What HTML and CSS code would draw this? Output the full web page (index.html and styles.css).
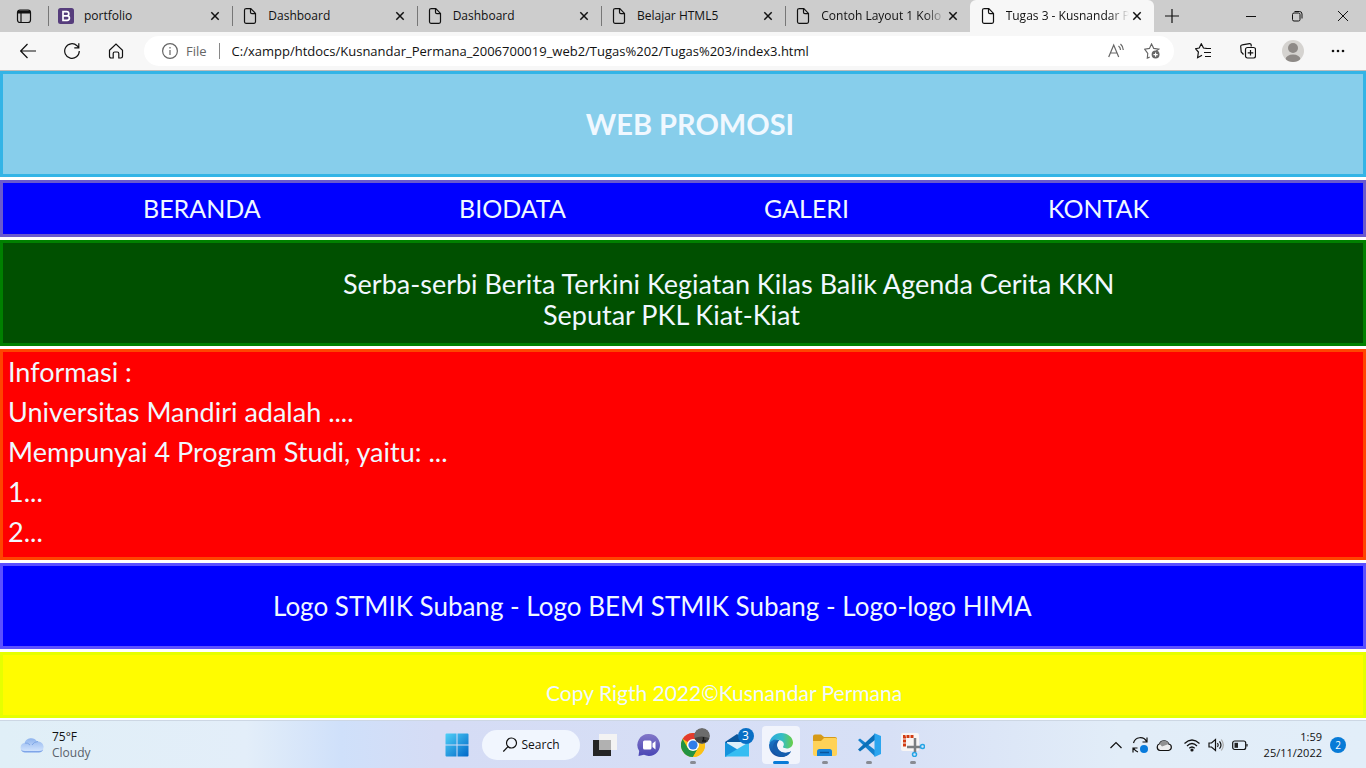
FILE: index.html
```html
<!DOCTYPE html>
<html lang="id">
<head>
<meta charset="utf-8">
<meta name="viewport" content="width=device-width, initial-scale=1">
<title>Tugas 3 - Kusnandar Permana</title>
<link rel="stylesheet" href="styles.css">
</head>
<body>
<svg class="defs" aria-hidden="true">
  <symbol id="page" viewBox="0 0 16 16"><path d="M3.5.7h5.3l4.7 4.7v8.4q0 1.5-1.5 1.5H4q-1.5 0-1.5-1.5V2.200Q2.500.7 4 .7M8.500.7v3.600q0 1.400 1.400 1.400h3.600"/></symbol>
  <symbol id="close" viewBox="0 0 16 16"><path d="M4.300 4.300l7.400 7.400M11.700 4.300l-7.400 7.400"/></symbol>
</svg>

<div class="tabbar">
  <button class="tab-menu" aria-label="Tab actions"><svg class="icon" viewBox="0 0 16 16"><rect x="1.500" y="2" width="13" height="12.500" rx="2.500"/><path d="M2 4h12" stroke-width="3"/><path d="M5 4v10"/></svg></button>
  <div class="tabs">
    <div class="tab"><svg class="favicon" viewBox="0 0 16 16"><rect width="16" height="16" rx="2.500" fill="#563d7c"/><path d="M5 3.600h3.700a2 2 0 0 1 0 4.200H5zm0 4.200h4.100a2.300 2.300 0 0 1 0 4.600H5z" fill="none" stroke="#fff" stroke-width="1.700"/></svg><button class="tab-title">portfolio</button><button class="tab-close" aria-label="Close portfolio"><svg class="icon"><use href="#close"/></svg></button></div>
    <div class="tab"><svg class="icon"><use href="#page"/></svg><button class="tab-title">Dashboard</button><button class="tab-close" aria-label="Close tab"><svg class="icon"><use href="#close"/></svg></button></div>
    <div class="tab"><svg class="icon"><use href="#page"/></svg><button class="tab-title">Dashboard</button><button class="tab-close" aria-label="Close tab"><svg class="icon"><use href="#close"/></svg></button></div>
    <div class="tab"><svg class="icon"><use href="#page"/></svg><button class="tab-title">Belajar HTML5</button><button class="tab-close" aria-label="Close tab"><svg class="icon"><use href="#close"/></svg></button></div>
    <div class="tab"><svg class="icon"><use href="#page"/></svg><button class="tab-title fade">Contoh Layout 1 Kolo</button><button class="tab-close" aria-label="Close tab"><svg class="icon"><use href="#close"/></svg></button></div>
    <div class="tab active"><svg class="icon"><use href="#page"/></svg><button class="tab-title fade">Tugas 3 - Kusnandar P</button><button class="tab-close" aria-label="Close tab"><svg class="icon"><use href="#close"/></svg></button></div>
  </div>
  <button class="new-tab" aria-label="New tab"><svg class="icon" viewBox="0 0 16 16"><path d="M8 1v14M1 8h14"/></svg></button>
  <div class="window-controls">
    <button aria-label="Minimize"><svg class="icon" viewBox="0 0 16 16"><path d="M3 8.500h10"/></svg></button>
    <button aria-label="Restore"><svg class="icon" viewBox="0 0 16 16"><rect x="3.500" y="5" width="7.500" height="8" rx="1.500"/><path d="M5.500 3.500h5q2.500 0 2.500 2.500v4.500"/></svg></button>
    <button aria-label="Close window"><svg class="icon" viewBox="0 0 16 16"><path d="M3 3l10 10M13 3L3 13"/></svg></button>
  </div>
</div>

<div class="toolbar">
  <div class="nav-buttons">
    <button aria-label="Back"><svg class="icon" viewBox="0 0 16 16"><path d="M16 8H1M7.500 1L.7 8l6.800 7"/></svg></button>
    <button aria-label="Refresh"><svg class="icon" viewBox="0 0 16 16"><path d="M15.300 8A7.300 7.300 0 1 1 13 2.700l1.500 1.600M14.800.300v4.500h-4.500"/></svg></button>
    <button aria-label="Home"><svg class="icon" viewBox="0 0 16 16"><path d="M1.500 7.300L8 1l6.500 6.300v6q0 1.700-1.700 1.700h-2V10.500Q10.800 9 9.300 9H6.700Q5.200 9 5.200 10.500V15h-2q-1.700 0-1.700-1.700z"/></svg></button>
  </div>
  <div class="address">
    <svg class="icon info" viewBox="0 0 16 16"><circle cx="8" cy="8" r="7.400"/><path d="M8 7v5M8 4v1.400"/></svg>
    <label for="url">File</label>
    <input id="url" type="text" value="C:/xampp/htdocs/Kusnandar_Permana_2006700019_web2/Tugas%202/Tugas%203/index3.html">
    <button aria-label="Read aloud"><svg class="icon" viewBox="0 0 16 16"><path d="M.7 14L5.700 2l5 12M2.500 10h6.400M10.500 3q2 1.500 2 4M12.500 1q2.800 2.500 2.800 6"/></svg></button>
    <button aria-label="Add to favorites"><svg class="icon" viewBox="0 0 17 17"><path d="M6 15l-2.500 1 .5-5L.7 6.500 5.800 5.700 8 1l2.300 4.700 5.500.8-2.800 2"/><circle cx="12.300" cy="12.300" r="4.200" fill="#666" stroke="none"/><path d="M12.300 10v4.600M10 12.300h4.600" stroke="#fff"/></svg></button>
  </div>
  <div class="tools">
    <button aria-label="Favorites"><svg class="icon" viewBox="0 0 16 16"><path d="M11.500 5.300L8.500 5 6.300.8 4.200 5l-3.700.7L3.400 9l-.8 5.700L7 12.300M10 5.500h6M9 9.500h7M10 13.500h6"/></svg></button>
    <button aria-label="Collections"><svg class="icon" viewBox="0 0 16 16"><path d="M3.500 11.500L1.200 9 .7 3.500Q.6 2 2.200 1.800L9.500.700q1.500-.2 1.700 1.300v1.500"/><rect x="5.500" y="4.500" width="10" height="10.500" rx="2"/><path d="M10.500 7v5.500M7.700 9.800h5.600"/></svg></button>
    <button class="avatar" aria-label="Profile"><svg viewBox="0 0 22 22"><defs><clipPath id="face"><circle cx="11" cy="11" r="11"/></clipPath></defs><g clip-path="url(#face)"><path d="M0 0h22v22H0z" fill="#d5d3d0"/><circle cx="11" cy="8" r="5" fill="#8e8a87"/><ellipse cx="11" cy="19.500" rx="7.500" ry="5" fill="#8e8a87"/></g></svg></button>
    <button aria-label="Settings and more"><svg class="icon dots" viewBox="0 0 16 16"><circle cx="3" cy="8" r="1.300"/><circle cx="8" cy="8" r="1.300"/><circle cx="13" cy="8" r="1.300"/></svg></button>
  </div>
</div>

<div class="site">
  <header class="box banner"><h1>WEB PROMOSI</h1></header>
  <nav class="box menu"><a href="#beranda">BERANDA</a><a href="#biodata">BIODATA</a><a href="#galeri">GALERI</a><a href="#kontak">KONTAK</a></nav>
  <section class="box news"><p>Serba-serbi Berita Terkini Kegiatan Kilas Balik Agenda Cerita KKN</p><p class="second">Seputar PKL Kiat-Kiat</p></section>
  <main class="box info-box"><p>Informasi :</p><p>Universitas Mandiri adalah ....</p><p>Mempunyai 4 Program Studi, yaitu: ...</p><p>1...</p><p>2...</p></main>
  <section class="box logos"><p>Logo STMIK Subang - Logo BEM STMIK Subang - Logo-logo HIMA</p></section>
  <footer class="box copyright"><p>Copy Rigth 2022©Kusnandar Permana</p></footer>
</div>

<div class="taskbar">
  <button class="weather"><svg viewBox="0 0 24 16"><defs><linearGradient id="cloud" x2="0" y2="1"><stop stop-color="#8fb4ee"/><stop offset="1" stop-color="#d7e8ff"/></linearGradient></defs><path d="M5 15.500a4.800 4.800 0 0 1-.5-9.500A7 7 0 0 1 17 4.500a5.500 5.500 0 1 1 2 11z" fill="url(#cloud)"/><path d="M1 12.500q1 3 4 3h14q3 0 4.300-3-2 1.500-4.300 1.500H5q-2.500 0-4-1.500" fill="#7fa5e8"/><path d="M5 6q3-.5 5 2M12 8q2-3.500 6-3.500" fill="none" stroke="#7ea6e6"/></svg><span class="stack"><span>75°F</span><span class="muted">Cloudy</span></span></button>
  <div class="apps">
    <button class="app" aria-label="Start"><svg viewBox="0 0 24 24"><defs><linearGradient id="win" x2="1" y2="1"><stop stop-color="#4fd0f7"/><stop offset="1" stop-color="#0067c8"/></linearGradient></defs><path d="M.5 1.500q0-1 1-1h10v11H.5zM12.500.5h10q1 0 1 1v10h-11zM.5 12.500h11v11h-10q-1 0-1-1zM12.500 12.500h11v10q0 1-1 1h-10z" fill="url(#win)"/></svg></button>
    <button class="search"><svg class="icon" viewBox="0 0 16 16"><circle cx="9.500" cy="6" r="5"/><path d="M6 9.700L1.300 14.500"/></svg>Search</button>
    <button class="app" aria-label="Task view"><svg viewBox="0 0 24 24"><path d="M0 7h18v16H0z" fill="#252525"/><path d="M6 1h18v16H6z" fill="#f3f3f3"/><path d="M6 7h12v10H6z" fill="#b1b1b1"/></svg></button>
    <button class="app" aria-label="Chat"><svg viewBox="0 0 24 24"><defs><linearGradient id="chat" x2="0" y2="1"><stop stop-color="#8277c8"/><stop offset="1" stop-color="#4a46b5"/></linearGradient></defs><path d="M12 1a11 11 0 1 1-5 20.800L1.500 23l.7-5A11 11 0 0 1 12 1" fill="url(#chat)"/><rect x="6" y="7.500" width="8.500" height="9" rx="1.500" fill="#fff"/><path d="M15.500 10.500L18.500 8v8.500l-3-2.500z" fill="#fff"/></svg></button>
    <button class="app running" aria-label="Chrome"><svg viewBox="0 0 24 24"><circle cx="12" cy="12" r="12" fill="#fbc116"/><path d="M12 12L1.600 6A12 12 0 0 1 22.400 6z" fill="#e33b2e"/><path d="M1.600 6A12 12 0 0 0 12 24l5.200-9H12L6.800 15z" fill="#229342"/><path d="M12 6h10.400A12 12 0 0 1 12 24l5.200-9z" fill="#fbc116"/><circle cx="12" cy="12" r="6" fill="#fff"/><circle cx="12" cy="12" r="4.600" fill="#2f7de9"/></svg><svg class="badge photo" viewBox="0 0 16 16"><circle cx="8" cy="8" r="8" fill="#6c6c6c"/><path d="M.5 10q7-3 15 0A8 8 0 0 1 .5 10" fill="#444"/><path d="M9.500 9v4M8 13h4" stroke="#191919" stroke-width="1.500"/></svg></button>
    <button class="app" aria-label="Mail"><svg viewBox="0 0 24 24"><path d="M0 9L12 1l12 8v5H0z" fill="#0b579d"/><path d="M2 9h20v11H2z" fill="#dceffa"/><path d="M0 9l15 9-15 6z" fill="#1593dc"/><path d="M24 9L0 23.500h24z" fill="#36bdf2"/></svg><span class="badge count">3</span></button>
    <button class="app running current" aria-label="Edge"><svg viewBox="0 0 24 24"><defs><linearGradient id="edgeTop"><stop stop-color="#2aa8e0"/><stop offset=".55" stop-color="#35bdc5"/><stop offset="1" stop-color="#69cf45"/></linearGradient><linearGradient id="edgeLow" x2="0" y2="1"><stop stop-color="#1677c9"/><stop offset="1" stop-color="#174b9b"/></linearGradient></defs><path d="M.3 10.500C1 4.300 6 0 12 0c7 0 12 4.500 12 9.500 0 3.800-3 6-6 6-4 0-4.400-1.300-3.600-2.400.8-1 .8-3.600-1.500-5C8.500 5.500 2.800 6.500.3 10.500" fill="url(#edgeTop)"/><path d="M.1 11.500C1.200 7 6.500 5.500 10.500 7.300 7.300 9 6.900 14 10 17.200c3.200 3.300 8 3.600 12 1-2.400 4.200-6 5.800-10 5.800C4.500 24-.5 18 .1 11.500" fill="url(#edgeLow)"/><path d="M10.500 7.300c-5 .2-7.500 4.500-6.300 9 .9 3.700 3.800 6.500 7.800 7.700 3.500 0 8-1.700 10-5.800-5 2.600-10 1.500-12.300-1.500-2.500-3.200-2-7.400.8-9.400" fill="#155eae"/></svg></button>
    <button class="app running" aria-label="File Explorer"><svg viewBox="0 0 24 24"><path d="M0 3.500q0-2 2-2h6l3 2.500h11q2 0 2 2v5H0z" fill="#d69a17"/><path d="M0 8h8l3-3h11.500q1.500 0 1.500 1.500V21q0 2-2 2H2q-2 0-2-2z" fill="#ffd257"/><path d="M4 23v-4.500q0-2.500 2.500-2.500h10q2.500 0 2.500 2.500V23z" fill="#1683d9"/><path d="M7 19.500h9" stroke="#0a559d" stroke-width="1.500"/></svg></button>
    <button class="app running" aria-label="Visual Studio Code"><svg viewBox="0 0 24 24"><path d="M1 7l2-1.500L18 17v6.500z" fill="#1481ce"/><path d="M1 16.500L3 18.500 18 7V.5z" fill="#0b6fb8"/><path d="M17.500.2L24 3v18l-6.500 3z" fill="#2ba5ef"/></svg></button>
    <button class="app running" aria-label="Snipping Tool"><svg viewBox="0 0 24 24"><rect width="18" height="18" rx="2" fill="#f8f5f4"/><path d="M12.500 3.500H3.500v10" fill="none" stroke="#d23b12" stroke-width="3" stroke-dasharray="3 1"/><path d="M14 5v14M6 14h14" stroke="#7b7d80" stroke-width="2.500"/><circle cx="21.500" cy="13.500" r="2" fill="none" stroke="#24a5e5" stroke-width="1.500"/><circle cx="13.500" cy="21.500" r="2" fill="none" stroke="#24a5e5" stroke-width="1.500"/></svg></button>
  </div>
  <div class="tray">
    <button aria-label="Show hidden icons"><svg class="icon" viewBox="0 0 16 16"><path d="M2.500 11L8 5.500l5.500 5.500"/></svg></button>
    <button aria-label="Update"><svg class="icon" viewBox="0 0 16 16"><path d="M1.500 6A7 7 0 0 1 14.500 4.500M15 .5v4.500h-4.500M1 15.500V11h4.500M1.500 11q1.500 3 4.500 4"/><circle cx="12" cy="12" r="4" fill="#087bdc" stroke="none"/></svg></button>
    <button aria-label="OneDrive"><svg class="icon" viewBox="0 0 16 16"><path d="M4 13.500a3.500 3.500 0 0 1-.5-6.700 5 5 0 0 1 9.200.2 3.300 3.300 0 0 1-.2 6.500z" fill="#eee"/><path d="M3.500 6.800a5 5 0 0 1 9.200.2L6 9.500z" fill="#929292" stroke="none"/></svg></button>
    <button class="wifi" aria-label="Wi-Fi"><svg class="icon" viewBox="0 0 16 16"><path d="M.5 6.500q7.500-7 15 0M3 9q5-5 10 0M5.300 11.300q2.700-2.600 5.400 0"/><circle cx="8" cy="13" r="1" fill="#222"/></svg></button>
    <button aria-label="Volume"><svg class="icon" viewBox="0 0 16 16"><path d="M1 6h2.500l4-3.500v11L3.500 10H1zM9.500 6q1.500 2 0 4M11.500 4.300q3 3.700 0 7.400"/><path d="M13.300 2.500q4 5.500 0 11" stroke="#aaa"/></svg></button>
    <button aria-label="Battery"><svg class="icon" viewBox="0 0 16 16"><rect x=".7" y="4" width="13" height="8.500" rx="2"/><path d="M2.500 5.800h3.500v5H2.500z" fill="#222" stroke="none"/><path d="M15 7v2.500"/></svg></button>
    <button class="clock stack"><span>1:59</span><span>25/11/2022</span></button>
    <button class="notices" aria-label="Notifications">2</button>
  </div>
</div>
</body>
</html>
```
FILE: styles.css
```css
* { box-sizing: border-box; }
body {
  margin: 0;
  min-height: 100vh;
  display: flex;
  flex-direction: column;
  background: #fff;
  color: #111;
  font: 12px/16px "Open Sans", sans-serif;
}
h1, p { margin: 0; }
button, input {
  padding: 0;
  border: 0;
  background: none;
  color: inherit;
  font: inherit;
}
button {
  display: flex;
  align-items: center;
  justify-content: center;
}
.defs { position: absolute; width: 0; height: 0; }
.icon {
  flex: none;
  width: 16px;
  height: 16px;
  fill: none;
  stroke: currentColor;
  stroke-width: 1.2;
}

/* Tab strip */
.tabbar {
  display: flex;
  height: 32px;
  background: #cdcdcd;
}
.tab-menu { flex: none; width: 48px; }
.tabs { display: flex; flex: 0 1 1106px; min-width: 0; }
.tab {
  flex: 1 1 0;
  min-width: 0;
  display: flex;
  align-items: center;
  gap: 10px;
  padding: 0 9px 0 10px;
  background: linear-gradient(#777, #777) 0 6px / 1px 20px no-repeat;
}
.tab.active { background: #f7f7f7; border-radius: 6px 6px 0 0; }
.favicon { flex: none; width: 16px; height: 16px; }
.tab-title {
  flex: 1;
  min-width: 0;
  overflow: hidden;
  justify-content: flex-start;
  white-space: nowrap;
}
.fade { mask-image: linear-gradient(90deg, #000 84%, transparent); }
.tab-close { margin-left: -10px; }
.tab-close .icon { stroke-width: 1.5; }
.new-tab { width: 36px; }
.window-controls { display: flex; margin-left: auto; }
.window-controls button { width: 46px; }
.window-controls .icon { stroke-width: 1; }

/* Address row */
.toolbar {
  display: flex;
  align-items: center;
  height: 39px;
  background: #f7f7f7;
  border-bottom: 1px solid #bbb;
}
.nav-buttons, .tools { display: flex; flex: none; }
.nav-buttons { padding: 0 6px; }
.nav-buttons button { width: 44px; }
.address {
  flex: 1;
  min-width: 0;
  display: flex;
  align-items: center;
  height: 30px;
  padding: 0 14px 0 18px;
  border-radius: 15px;
  background: #fff;
  color: #666;
}
.address label {
  margin-left: 8px;
  padding-right: 12px;
  border-right: 1px solid #888;
  font-size: 13px;
}
.address input {
  flex: 1;
  min-width: 0;
  margin-left: 12px;
  color: #111;
  font-size: 13px;
}
.address button { margin-left: 20px; }
.tools { padding: 0 6px; }
.tools button { width: 45px; }
.avatar svg { width: 22px; height: 22px; }
.tools .dots { fill: #111; stroke: none; }

/* Promotional site */
.site {
  flex: 1;
  display: flex;
  flex-direction: column;
  gap: 3px;
  padding-bottom: 2px;
  color: aliceblue;
  font: 25px/31px Lato, sans-serif;
}
.box { border: 3px solid; }
.box > * { color: aliceblue; }
.banner {
  padding: 31px 0 31px 14px;
  border-color: #33b4e6;
  background: skyblue;
  text-align: center;
}
.banner h1 { font-size: 29px; line-height: 38px; }
.menu {
  display: grid;
  grid-template-columns: 316px 305px 284px 1fr;
  padding: 10px 0 10px 140px;
  border-color: slateblue;
  background: #00f;
}
.menu a { text-decoration: none; }
.news {
  padding: 25px 0 13px 340px;
  border-color: green;
  background: #005000;
  font-size: 27px;
}
.news .second { padding-left: 200px; }
.info-box {
  padding: 0 5px 5px;
  border-color: #ff4500;
  background: red;
  font-size: 27px;
  line-height: 40px;
}
.logos {
  padding: 25px 0 24px 270px;
  border-color: #5b50ff;
  background: #00f;
  font-size: 26px;
}
.copyright {
  padding: 25px 0 10px 543px;
  border-color: #e6ff00;
  background: #fffc00;
  font-size: 21px;
  line-height: 25px;
}

/* Taskbar */
.taskbar {
  display: grid;
  grid-template-columns: 1fr auto 1fr;
  align-items: center;
  height: 48px;
  border-top: 1px solid #cdd7e4;
  background: linear-gradient(90deg, #e0eff7, #e3eef9 18%, #cfe0fa 25%, #d5dcf5 32%, #d7e0f6 65%, #e2edf8 82%, #e2eef9);
}
.stack { display: flex; flex-direction: column; }
.weather { justify-self: start; gap: 8px; margin-left: 20px; text-align: left; }
.weather svg { width: 24px; height: 16px; }
.muted { color: #59616a; }
.apps { display: flex; gap: 6px; align-items: center; padding-left: 3px; }
.app {
  position: relative;
  width: 38px;
  height: 38px;
  border-radius: 4px;
}
.app > svg:first-child { width: 24px; height: 24px; }
.running::after {
  content: "";
  position: absolute;
  bottom: 0;
  width: 6px;
  height: 3px;
  border-radius: 2px;
  background: #888b93;
}
.current { background: #f1f4fc; }
.current::after { width: 16px; background: #087bd7; }
.badge { position: absolute; top: 2px; right: 2px; width: 16px; height: 16px; border-radius: 50%; }
.count { background: #086fc5; color: #fff; }
.search {
  gap: 4px;
  width: 98px;
  height: 30px;
  border-radius: 15px;
  background: #f1f6fe;
}
.tray { display: flex; justify-self: end; align-items: center; gap: 8px; margin-right: 20px; }
.tray .wifi { margin-left: 4px; }
.clock { align-items: flex-end; margin-left: 8px; font-size: 11px; }
.notices { width: 16px; height: 16px; border-radius: 50%; background: #087bd7; color: #fff; font-size: 10px; }
```
